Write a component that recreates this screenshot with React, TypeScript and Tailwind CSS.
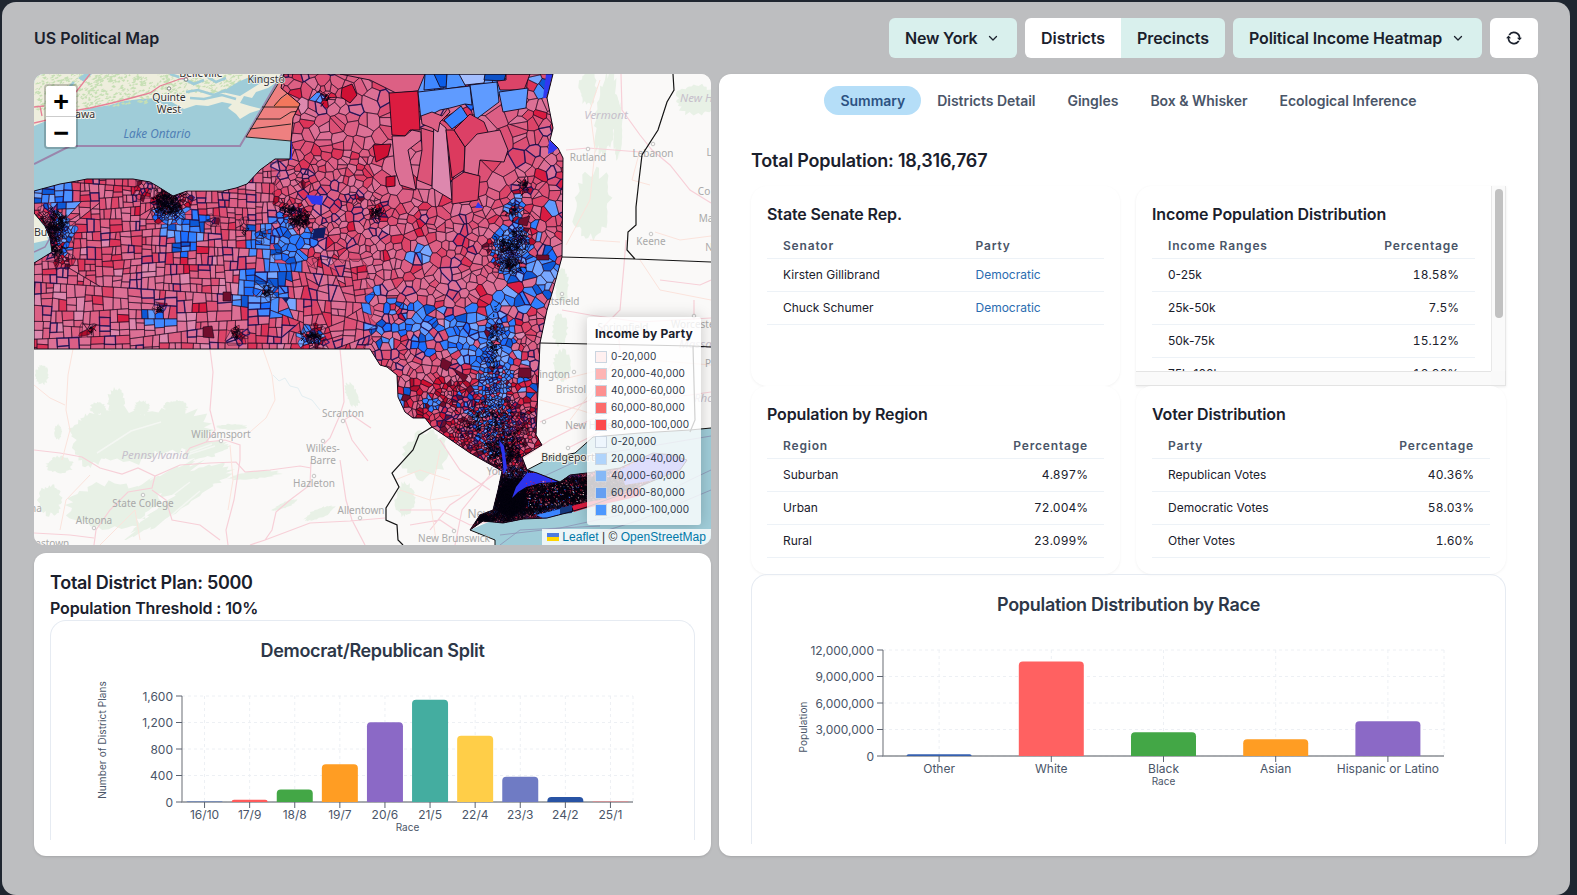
import React from "react";

type Pt = [number, number];

/* ---------- deterministic random numbers ---------- */
function makeRng(seed: number) {
  let s = seed;
  return () => {
    s = (s + 0x6d2b79f5) | 0;
    let t = Math.imul(s ^ (s >>> 15), 1 | s);
    t = (t + Math.imul(t ^ (t >>> 7), 61 | t)) ^ t;
    return ((t ^ (t >>> 14)) >>> 0) / 4294967296;
  };
}

/* ---------- geography ---------- */
const STATE =
  "M34 191L60 184L77 181L87 179L133 179L150 182L157 186L173 196L187 191L223 191L236 188L247 184L260 170L275 159L290 159L291 141L293 118L300 104L281 88L284 74H553L547 98L553 128L550 140L558 148L563 158L562 257L553 290L547 310L540 343L536 435L542 445L522 457L527 470L537 473L560 482L570 475L587 473L620 468L653 453L672 455L687 460L680 470L655 480L620 495L587 507L570 512L547 518L523 519L503 523L483 521L470 530L480 515L493 510L498 490L502 471L470 453L432 427L425 418L413 418L405 412L398 397L397 375L387 367L380 365L370 349H34V263L52 252L50 238L45 226L34 213Z";

/* city centres: x, y, radius, minimum cell area */
const CITIES: [number, number, number, number][] = [
  [55, 232, 16, 5], [48, 218, 10, 8], [62, 258, 9, 9], [168, 206, 16, 5], [180, 198, 10, 8],
  [297, 217, 13, 7], [283, 205, 9, 16], [377, 213, 7, 10], [354, 200, 7, 16], [508, 256, 16, 6], [520, 238, 12, 7],
  [516, 210, 9, 12], [523, 186, 8, 10], [497, 246, 10, 9], [313, 337, 11, 8], [238, 336, 6, 8],
  [267, 291, 7, 9], [326, 97, 8, 16], [303, 180, 7, 20], [142, 190, 9, 18], [490, 358, 9, 14],
  [495, 385, 22, 14], [492, 415, 26, 11], [470, 430, 25, 12], [500, 440, 28, 8], [520, 425, 18, 10],
  [430, 405, 14, 22], [455, 395, 16, 18], [498, 330, 12, 16], [400, 310, 8, 20], [90, 329, 5, 12],
  [160, 308, 5, 12], [245, 225, 5, 14], [262, 235, 6, 14], [212, 220, 5, 14],
];

function targetArea(x: number, y: number) {
  if (y > 466 && x > 480) return x > 580 ? 14 : 6;
  let a = 78;
  if (x > 385 && x < 520 && y < 195) a = 430;
  else if (x >= 520 && y < 200) a = 120;
  else if (x > 300 && x <= 385 && y < 150) a = 170;
  else if (x > 240 && x < 385 && y < 260) a = 70;
  else if (x > 365) a = y > 320 ? 66 : 100;
  else if (y > 290) a = 110;
  for (const [cx, cy, r, m] of CITIES) {
    const d = Math.hypot(x - cx, y - cy) / r;
    if (d < 1.6) a = Math.min(a, d < 0.5 ? m : m + (d - 0.5) * (d - 0.5) * 80);
  }
  return a;
}

/* blue territory: x, y, rx, ry, probability */
const BLUE: [number, number, number, number, number][] = [
  [50, 192, 20, 16, 0.9], [64, 222, 9, 34, 0.7], [184, 226, 22, 18, 0.85], [186, 244, 14, 12, 0.95],
  [168, 214, 14, 12, 0.7], [278, 222, 12, 12, 0.6], [258, 237, 12, 14, 0.95], [284, 252, 20, 30, 0.93], [308, 238, 18, 9, 0.95],
  [262, 288, 26, 22, 0.9], [244, 297, 10, 12, 0.8], [278, 305, 14, 12, 0.8], [160, 318, 20, 6, 0.95],
  [308, 336, 14, 10, 0.5], [512, 252, 20, 28, 0.85], [516, 214, 9, 20, 0.8], [548, 270, 14, 20, 0.85],
  [545, 220, 12, 22, 0.4], [525, 290, 26, 24, 0.75], [490, 86, 66, 14, 0.6], [420, 255, 16, 10, 0.7],
  [400, 325, 34, 26, 0.42], [440, 330, 30, 24, 0.5], [480, 335, 36, 34, 0.75], [380, 305, 20, 14, 0.5],
  [494, 365, 18, 45, 0.82], [402, 395, 12, 10, 0.6], [431, 403, 9, 9, 0.8], [470, 400, 12, 18, 0.4],
  [525, 370, 14, 30, 0.35], [495, 430, 20, 30, 0.35], [560, 512, 26, 8, 0.9], [510, 492, 40, 24, 0.4], [318, 98, 8, 6, 0.5],
];

const REDS = ["#dc7095", "#dc6084", "#dc5075", "#dc5f85", "#dc4468", "#dc3358", "#dc7399", "#dc5075", "#d91c42", "#dd88ae"];
const HOT = ["#dc2448", "#d00f30", "#dc4468", "#b00d2c", "#700d2c", "#dc6084"];
const BLUES = ["#4a90ff", "#5f9bff", "#2f7fff", "#1c6eff", "#4088ff", "#0d58d6", "#78a8ff"];

function pickColor(x: number, y: number, r: () => number) {
  for (const [cx, cy, rx, ry, p] of BLUE) {
    const d = ((x - cx) / rx) ** 2 + ((y - cy) / ry) ** 2;
    if (d < 1 && r() < p) return BLUES[Math.floor(r() * BLUES.length)];
  }
  const hot = y > 380 || targetArea(x, y) < 35;
  if (hot && r() < 0.6) return HOT[Math.floor(r() * HOT.length)];
  if (y > 270 && x < 240 && r() < 0.5) return r() < 0.25 ? "#dd88ae" : "#dc7095";
  return REDS[Math.floor(r() * r() * 1.25 * REDS.length) % REDS.length];
}

function areaOf(p: Pt[]) {
  let a = 0;
  for (let i = 0; i < p.length; i++) {
    const q = p[(i + 1) % p.length];
    a += p[i][0] * q[1] - q[0] * p[i][1];
  }
  return Math.abs(a / 2);
}

function splitBy(p: Pt[], c: Pt, nx: number, ny: number): [Pt[], Pt[]] {
  const A: Pt[] = [], B: Pt[] = [];
  for (let i = 0; i < p.length; i++) {
    const u = p[i], v = p[(i + 1) % p.length];
    const du = (u[0] - c[0]) * nx + (u[1] - c[1]) * ny;
    const dv = (v[0] - c[0]) * nx + (v[1] - c[1]) * ny;
    (du >= 0 ? A : B).push(u);
    if (du >= 0 !== dv >= 0) {
      const t = du / (du - dv);
      const m: Pt = [u[0] + (v[0] - u[0]) * t, u[1] + (v[1] - u[1]) * t];
      A.push(m);
      B.push(m);
    }
  }
  return [A, B];
}

interface Leaf { poly: Pt[]; x: number; y: number; goal: number }

/* Western townships stay on a surveyed grid; elsewhere cells become Voronoi regions. */
function buildCells() {
  const r = makeRng(41);
  const leaves: Leaf[] = [];
  const walk = (p: Pt[], depth: number) => {
    if (p.length < 3) return;
    let cx = 0, cy = 0, x0 = 1e9, x1 = -1e9, y0 = 1e9, y1 = -1e9;
    for (const [x, y] of p) {
      cx += x / p.length;
      cy += y / p.length;
      x0 = Math.min(x0, x); x1 = Math.max(x1, x);
      y0 = Math.min(y0, y); y1 = Math.max(y1, y);
    }
    if (y0 > 362 && x1 < 375) return;
    if (x0 > 575 && y1 < 440) return;
    const a = areaOf(p);
    const t = targetArea(cx, cy);
    const goal = a < 900 ? t * (0.7 + r() * 0.9) : 0;
    if (a <= goal || depth > 22) {
      const j = Math.sqrt(a) * 0.9;
      leaves.push({ poly: p, x: cx + (r() - 0.5) * j, y: cy + (r() - 0.5) * j, goal: Math.max(a, t) });
      return;
    }
    const wide = x1 - x0 > y1 - y0;
    const wob = t < 30 ? 0.7 : cx > 280 ? 0.4 : 0.09;
    const ang = (wide ? Math.PI / 2 : 0) + (r() - 0.5) * 2 * wob * (r() < 0.15 ? 1.8 : 1);
    const c: Pt = [cx + (r() - 0.5) * (x1 - x0) * 0.25, cy + (r() - 0.5) * (y1 - y0) * 0.25];
    const [A, B] = splitBy(p, c, -Math.sin(ang), Math.cos(ang));
    walk(A, depth + 1);
    walk(B, depth + 1);
  };
  walk([[20, 60], [700, 60], [700, 545], [20, 545]], 0);

  const G = 10;
  const grid: Record<string, Leaf[]> = {};
  for (const l of leaves) {
    const k = Math.floor(l.x / G) + ":" + Math.floor(l.y / G);
    (grid[k] = grid[k] || []).push(l);
  }
  const fills: Record<string, string> = {};
  let navy = "";
  for (const l of leaves) {
    let p = l.poly;
    const organic = l.x > 370 || (l.x > 275 && l.y < 262) || targetArea(l.x, l.y) < 40;
    if (organic) {
      const R = Math.sqrt(l.goal) * 1.7;
      p = [[l.x - R, l.y - R], [l.x + R, l.y - R], [l.x + R, l.y + R], [l.x - R, l.y + R]];
      const near: [number, Leaf][] = [];
      const n = Math.ceil((R * 2) / G);
      const gx = Math.floor(l.x / G), gy = Math.floor(l.y / G);
      for (let i = -n; i <= n; i++)
        for (let k = -n; k <= n; k++)
          for (const o of grid[gx + i + ":" + (gy + k)] || [])
            if (o !== l) near.push([Math.hypot(o.x - l.x, o.y - l.y), o]);
      near.sort((u, v) => u[0] - v[0]);
      for (const [dist, o] of near) {
        if (p.length < 3) break;
        const far = Math.max(...p.map((q) => Math.hypot(q[0] - l.x, q[1] - l.y)));
        if (dist > far * 2) break;
        p = splitBy(p, [(l.x + o.x) / 2, (l.y + o.y) / 2], l.x - o.x, l.y - o.y)[0];
      }
      if (p.length < 3) continue;
    }
    const col = pickColor(l.x, l.y, r);
    const d = "M" + p.map((q) => q[0].toFixed(1) + " " + q[1].toFixed(1)).join("L") + "Z";
    fills[col] = (fills[col] || "") + d;
    if (r() < 0.1) navy += d;
  }
  return { fills, navy };
}
const CELLS = buildCells();

/* tangled street-level outlines around cities */
function scribble() {
  const r = makeRng(7);
  let d = "";
  const spots: [number, number, number, number, number][] = [
    [53, 230, 9, 18, 110], [62, 222, 6, 8, 35], [55, 250, 8, 8, 50], [165, 205, 11, 9, 85], [175, 208, 8, 9, 50], [168, 196, 17, 5, 45], [300, 220, 10, 7, 65], [290, 209, 9, 6, 30],
    [377, 213, 6, 5, 26], [507, 246, 11, 8, 50], [512, 265, 11, 8, 50], [520, 240, 8, 12, 30], [513, 212, 5, 10, 14], [526, 186, 5, 6, 14], [313, 337, 9, 5, 38],
    [237, 335, 4, 5, 14], [267, 291, 4, 5, 16], [490, 420, 34, 22, 110], [505, 452, 18, 18, 220], [495, 345, 6, 40, 50],
    [508, 500, 15, 24, 850], [520, 490, 18, 22, 420], [560, 494, 34, 15, 650], [600, 487, 32, 13, 300], [483, 519, 10, 6, 130], [525, 508, 28, 8, 220],
    [326, 97, 5, 5, 10], [160, 308, 3, 3, 7], [92, 329, 3, 2, 6], [245, 233, 3, 3, 5],
  ];
  for (const [x, y, a, b, n] of spots) {
    for (let i = 0; i < n; i++) {
      const t = r() * 6.283, q = Math.sqrt(r()) * (0.3 + 0.8 * r());
      let px = x + Math.cos(t) * a * q * 1.25, py = y + Math.sin(t) * b * q * 1.25;
      d += `M${px.toFixed(1)} ${py.toFixed(1)}`;
      for (let k = 0; k < 3; k++) {
        px += (r() - 0.5) * 5;
        py += (r() - 0.5) * 5;
        d += `L${px.toFixed(1)} ${py.toFixed(1)}`;
      }
    }
  }
  return d;
}
const SCRIBBLE = scribble();

const TINY = (() => {
  const r = makeRng(99);
  const out: { d: string; c: string }[] = [];
  const cs = ["#e2264b", "#f4a6b8", "#2f6fff", "#ffffff", "#c01034", "#8a1030"];
  for (const c of cs) {
    let d = "";
    for (let i = 0; i < (c === "#ffffff" ? 12 : 34); i++) {
      const x = 525 + r() * 58, y = 480 + r() * 27;
      d += `M${x.toFixed(1)} ${y.toFixed(1)}l${(0.8 + r() * 1.4).toFixed(1)} .4l-.5 1.1z`;
    }
    out.push({ d, c });
  }
  return out;
})();

/* ragged woodland patches */
function blotch(cx: number, cy: number, rx: number, ry: number, seed: number, tilt = 0) {
  const r = makeRng(seed);
  let d = "";
  const n = 46;
  for (let i = 0; i < n; i++) {
    const t = (i / n) * 6.283, k = 0.76 + r() * 0.34;
    const x = Math.cos(t) * rx * k, y = Math.sin(t) * ry * k;
    d += `${i ? "L" : "M"}${(cx + x * Math.cos(tilt) - y * Math.sin(tilt)).toFixed(1)} ${(cy + x * Math.sin(tilt) + y * Math.cos(tilt)).toFixed(1)}`;
  }
  return d + "Z";
}
const WOODS = [
  blotch(120, 436, 52, 28, 1), blotch(170, 430, 44, 24, 2), blotch(92, 440, 20, 28, 3), blotch(112, 505, 46, 24, 4),
  blotch(116, 402, 9, 14, 5), blotch(176, 408, 12, 8, 6), blotch(98, 408, 8, 6, 61), blotch(142, 408, 8, 8, 62), blotch(150, 490, 60, 9, 7, -0.55), blotch(175, 505, 60, 8, 8, -0.6),
  blotch(195, 480, 40, 12, 9, -0.3), blotch(205, 450, 24, 8, 10, -0.2), blotch(232, 427, 16, 3, 11), blotch(255, 475, 28, 4, 12, -0.1),
  blotch(320, 513, 18, 5, 13, -0.4), blotch(285, 505, 14, 3, 14, -0.4), blotch(352, 395, 6, 14, 15, -0.4), blotch(42, 375, 7, 10, 16),
  blotch(58, 432, 4, 8, 17), blotch(606, 115, 11, 44, 18, 0.1), blotch(592, 205, 19, 36, 19, 0.15), blotch(588, 88, 9, 18, 20),
  blotch(695, 100, 20, 16, 21), blotch(562, 285, 7, 20, 22), blotch(560, 330, 8, 16, 23), blotch(425, 455, 22, 26, 24, 0.5),
  blotch(405, 500, 10, 18, 25), blotch(50, 500, 12, 16, 26), blotch(60, 465, 14, 9, 27), blotch(562, 365, 9, 16, 28), blotch(618, 130, 5, 30, 29),
];
const ONTARIO_WOODS = (() => {
  const r = makeRng(55);
  let d = "";
  for (let i = 0; i < 900; i++) {
    const x = 34 + r() * 205, y = 70 + r() * (x < 150 ? 40 : 32) - (x - 34) * 0.05;
    d += `M${x.toFixed(1)} ${y.toFixed(1)}l${(1 + r() * 3).toFixed(1)} ${(-0.6 - r() * 1.6).toFixed(1)}l${(r() * 1.4).toFixed(1)} ${(0.6 + r()).toFixed(1)}l${(-1 - r() * 2).toFixed(1)} ${(0.5 + r()).toFixed(1)}z`;
  }
  return d;
})();

const PLACES: [string, number, number][] = [
  ["Williamsport", 221, 438], ["State College", 143, 507], ["Altoona", 94, 524],
  ["Scranton", 343, 417], ["Wilkes-", 323, 452], ["Barre", 323, 464], ["Hazleton", 314, 487],
  ["Allentown", 361, 514], ["New Brunswick", 454, 542], ["Rutland", 588, 161],
  ["Lebanon", 653, 157], ["Keene", 651, 245], ["New Haven", 592, 429],
  ["Bristol", 571, 393], ["Springfield", 623, 331], ["Torrington", 545, 378],
];
const DOTS: Pt[] = [
  [221, 441], [143, 495], [94, 528], [343, 421], [323, 441], [314, 476], [360, 518], [588, 149], [653, 144], [651, 234],
  [562, 294], [574, 372], [544, 422], [568, 448], [454, 531], [694, 316],
];

function StateMap() {
  return (
    <svg className="block h-full w-full" viewBox="34 74 677 471" fontFamily='"Noto Sans", sans-serif'>
      <defs>
        <clipPath id="ny"><path d={STATE} /></clipPath>
      </defs>
      <rect x="34" y="74" width="677" height="471" fill="#faf9f8" />
      {/* Lake Ontario and its north shore */}
      <path d="M34 74H300V165H275L247 190H187L173 200L150 190H34Z" fill="#9fccd8" />
      <path d="M34 210L52 235V252L34 270Z" fill="#9fccd8" />
      <path d="M34 213L45 228L48 240L34 243Z" fill="#eef0e0" />
      <path d="M34 74H288L268 88L256 92L252 98L244 96L240 103L250 106L262 109L250 113L240 119L236 114L228 108L232 104L222 102L208 106L196 105L184 109L170 101L158 98L140 99L124 101L110 105L92 108L76 112L62 116L46 121L34 126Z" fill="#eeeedd" />
      <path d={ONTARIO_WOODS} fill="#c6dfb4" />
      <path d="M170 74L182 78L194 84L204 80M186 92L198 90L214 95L226 90M60 97L66 91L74 82M190 98L204 99L222 95L236 99M206 76L216 82L226 78" fill="none" stroke="#9fccd8" strokeWidth="2.6" />
      <path d="M222 92L238 82L252 76L270 77L256 86L240 96ZM78 78L84 74H92L84 82Z" fill="#9fccd8" />
      <path d="M34 123L60 117L66 112L90 108L112 103L135 97L150 93L160 86L180 79L196 75M76 92L90 74M34 107L44 106M40 106L42 116" fill="none" stroke="#e68096" strokeWidth="1.3" />
      <path d="M34 164L70 146H240L282 74" fill="none" stroke="#9a86ac" strokeWidth="2" />
      <path d="M34 252L45 247L50 238" fill="none" stroke="#9a86ac" strokeWidth="1.5" />

      {/* inland woodland and roads */}
      <path d={WOODS.join("")} fill="#e8f1e6" />
      <path d="M97 453l34-22 30-9M150 480l40-26 25-8M140 520l50-38M160 525l40-34M190 452l22-8" stroke="#faf9f8" strokeWidth="1.5" fill="none" opacity=".7" />
      <g fill="none" stroke="#f7d0d8" strokeWidth="1.2">
        <path d="M34 450L60 453L82 457L100 468L122 474L138 468L155 476L180 465L210 463L236 462L245 472L270 470L300 466L311 468" />
        <path d="M210 349L213 372L210 410L215 430L206 442L190 448L186 453" />
        <path d="M206 442L225 440L240 445L240 460L234 500L226 530L228 545M340 349L343 380L344 402L340 415L330 438L324 444M344 420L352 415L365 424L371 428M345 420L352 440L368 461M311 462L310 485L290 500L276 512L272 530L265 540L250 545M340 460L346 500L352 520L365 545M265 540L310 523L350 521L385 518" />
        <path d="M155 476L152 488L128 492L110 510L96 530L94 545M152 490L166 500L172 520L200 525L220 540M34 533L70 535L94 538" />
        <path d="M621 74L622 110L640 135L652 150L670 165L690 190L711 203M566 150L588 148L640 152M626 240L624 265L620 310L600 330M562 310L590 315L640 322L711 318M660 280L700 285L711 280M694 300V320" />
        <path d="M520 460L550 440L590 420L640 400L690 395L711 392M540 422L590 400L620 350L618 330M568 448L600 432M400 510L440 510L470 525L500 520M430 530L450 505L480 485L500 470M440 440L460 470L490 490M455 545L462 510L490 475M410 525L440 520L455 530" />
      </g>
      <g fill="none" stroke="#fbe3dc" strokeWidth="1">
        <path d="M73 349L68 375L66 410L70 430L62 460M34 385L50 398L65 405M263 349L272 375L275 400L266 418L250 432M60 530L66 500L90 475M100 545L120 525L135 510L140 540M230 445L233 480L228 510" />
        <path d="M600 80L590 110L595 150L590 200L566 245M590 240L620 242M640 150L632 180L650 185M655 232L680 240L711 236M640 260L660 290L711 300M560 380L600 370L650 360L711 365M570 420L600 380L610 350" />
        <path d="M395 480L420 470L450 480M400 490L430 500L460 495M440 450L430 500L436 540M540 400L580 410L640 430" />
      </g>
      <path d="M273 375l6 6 6-3 5 8 8 2 4 8 10 4 8 10" fill="none" stroke="#e2eef2" />

      {/* Atlantic coast */}
      <path d="M527 470L550 458L575 453L593 437L640 433L690 430L711 428V545H495V540L470 530L493 520Z" fill="#9fccd8" />
      <path d="M527 470L550 458L575 453L593 437L640 433L690 430L711 428M470 530L495 540V545" fill="none" stroke="#111" />
      <path d="M540 478L590 455L640 448L711 436M500 535L560 528L620 515L690 480L711 470M500 545L520 530L600 526M560 545L640 520L711 490" fill="none" stroke="#8d93b5" strokeWidth=".8" />

      {/* place names beneath the overlay */}
      <g fontSize="10" fill="#a9a9a9" textAnchor="middle">
        {PLACES.map(([t, x, y]) => <text key={t} x={x} y={y}>{t}</text>)}
        <text x="671" y="328" textAnchor="start">Worcester</text>
        <text x="559" y="305">Pittsfield</text>
        <text x="36" y="512">ha</text>
        <text x="52" y="547">nstown</text>
        <text x="704" y="195">Co</text>
        <text x="706" y="222">Ma</text>
        <text x="709" y="251">N</text>
        <text x="709" y="156">L</text>
        <text x="708" y="367">P</text>
        <text x="497" y="475">York</text>
        <text x="480" y="518" fontSize="12">New</text>
      </g>
      <g fill="#faf9f8" stroke="#b9b9b9" strokeWidth=".8">
        {DOTS.map(([x, y], i) => <circle key={i} cx={x} cy={y} r="1.8" />)}
      </g>
      <g fontStyle="italic" fill="#c6bfcb" textAnchor="middle" fontSize="11.5">
        <text x="155" y="459">Pennsylvania</text>
        <text x="606" y="119">Vermont</text>
        <text x="680" y="102" textAnchor="start">New H</text>
        <text x="679" y="348" textAnchor="start">Massa</text>
        <text x="694" y="402" textAnchor="start">Rho</text>
      </g>
      <g fontSize="10.5" fill="#333" textAnchor="middle" stroke="#f4f4ee" strokeWidth="2" paintOrder="stroke">
        <text x="201" y="77">Belleville</text>
        <text x="169" y="101">Quinte</text>
        <text x="169" y="113">West</text>
        <text x="75" y="117.500" textAnchor="start">awa</text>
        <text x="34" y="236" textAnchor="start">Buf</text>
        <text x="568" y="461">Bridgeport</text>
      </g>
      <g fill="#fff" stroke="#666" strokeWidth=".8"><circle cx="169" cy="88.500" r="1.700" /><circle cx="186" cy="79.500" r="1.700" /></g>
      <text x="157" y="138" textAnchor="middle" fontSize="11.8" fontStyle="italic" fill="#4f7fb5">Lake Ontario</text>

      {/* neighbouring state lines */}
      <path d="M673 74L674 90L667 102L658 130L642 155L639 180L636 207V225L628 232L627 250L635 259M562 257L635 259L711 262M540 343L693 346L711 347M693 346L695 420L690 432M432 427L419 435L413 450L392 473L399 487L386 508V520L397 525L398 540L403 545" fill="none" stroke="#151515" strokeWidth="1.2" />

      {/* offshore precincts */}
      <path d="M246 137L284 74L300 104L293 118L291 141Z" fill="#ee8080" />
      <path d="M275 103L292 92L306 106L300 108H274Z" fill="#f47452" opacity=".8" />
      <path d="M246 137L284 74M246 137L291 141M250 129L291 124M256 119H280L291 112L300 111M262 107H300M274 106L281 98L300 84" fill="none" stroke="#1b1b1b" strokeWidth=".9" />

      <g clipPath="url(#ny)">
        <rect x="34" y="74" width="677" height="471" fill="#dc5075" />
        {Object.entries(CELLS.fills).map(([c, d]) => (
          <path key={c} d={d} fill={c} />
        ))}
        <path d={CELLS.navy} fill="none" stroke="#2a2ab0" strokeWidth="1.5" opacity=".7" />
        <path d={Object.values(CELLS.fills).join("")} fill="none" stroke="#1c0a20" strokeWidth=".5" />

        {/* northern wilderness districts */}
        <g stroke="#14081c" strokeWidth=".9">
          <path d="M340 74H425L418 91L396 93L370 80Z" fill="#dc6084" />
          <path d="M425 74H444V88L424 90Z" fill="#4088ff" />
          <path d="M434 74H447V87L440 87Z" fill="#0c5ee8" />
          <path d="M447 74H460L466 86L446 89Z" fill="#4f94ff" />
          <path d="M459 74H486L484 83L465 85Z" fill="#a4bfff" />
          <path d="M485 74H506L504 81L484 80Z" fill="#0d52c8" />
          <path d="M497 81L506 80V74H530L524 90L500 90Z" fill="#dc4468" />
          <path d="M389 93L418 91L420 130H410L405 136L392 135Z" fill="#dc1c40" />
          <path d="M418 92L470 86L472 105L465 104L450 108L440 110L421 120Z" fill="#5f9bff" />
          <path d="M470 85L497 82L499 102L475 120Z" fill="#5f9bff" />
          <path d="M499 92L528 88L526 108L503 112Z" fill="#5f9bff" />
          <path d="M392 136L405 136L412 130L421 132V140L408 150L416 190L400 185L395 170Z" fill="#dc7095" />
          <path d="M421 128L434 132L432 186L417 180L422 150Z" fill="#dc5478" />
          <path d="M434 118L446 128L452 200L432 188Z" fill="#dd88ae" />
          <path d="M421 116L432 112L442 116L448 108L450 112L440 122L438 132L432 128L422 124Z" fill="#dc6084" />
          <path d="M444 120L461 106L468 117L452 129Z" fill="#3a84ff" />
          <path d="M446 130L454 130L465 147L464 170L452 178Z" fill="#dc3a5e" />
          <path d="M454 130L470 114L484 122L488 132L465 147Z" fill="#dc4066" />
          <path d="M465 147L477 134L500 130L508 150L504 162L480 160L478 176L464 172Z" fill="#dc6a8e" />
          <path d="M464 172L480 176L478 200L452 204V180Z" fill="#dc4468" />
          <path d="M373 145L391 144L388 156L376 162Z" fill="#cf1034" />
          <path d="M342 88L352 84L357 95L350 103L341 97Z" fill="#cf1034" />
          <path d="M386 177L395 176V186L386 187Z" fill="#cf1034" />
        </g>
        <g fill="#3038f0">
          <path d="M546 74H553L546 98H543ZM549 140L558 148L553 152L548 154ZM289 141H292V160H289Z" />
          <path d="M306 195L323 196L322 205L312 204ZM478 202L483 208L475 208Z" />
          <path d="M498 440L503 446L506 468L503 475L502 455Z" />
        </g>
        <g fill="#101c60"><path d="M314 229L326 227L324 238L312 239ZM282 298L290 297L286 303Z" /></g>
        <g fill="#700d2c" stroke="#14081c" strokeWidth=".6">
          <path d="M223 292H231V301H223ZM203 327L212 326L214 338L203 337ZM519 219L530 216L527 226L518 224ZM536 255H549V260H537ZM442 358L452 363L447 371L440 367ZM452 368L468 376L464 382ZM519 368H531V378L518 377Z" />
        </g>
        <path d="M497 478H560L587 477H640L640 500L590 502L547 510L500 520L470 530L493 508Z" fill="#05030c" opacity=".6" />
        <path d={SCRIBBLE} fill="none" stroke="#05030f" strokeWidth=".8" />
      </g>
      <path d="M527 473L537 473L558 482L540 483L526 487L518 492L512 498L516 487Z" fill="#2d34ee" />
      <path d="M499 440L504 446L507 468L504 474L502 455Z" fill="#2d34ee" />
      <path d="M620 470L653 453L672 455L687 460L680 470L655 480L625 485Z" fill="#5a5af0" />
      {TINY.map((t) => <path key={t.c} d={t.d} fill={t.c} />)}
      <path d="M572 506L587 502L600 500L640 486V496L587 508L574 512Z" fill="#dc1c40" />
      <path d="M560 508L572 505V513L560 514Z" fill="#153a80" />
      <path d="M536 515L560 509V514L545 519Z" fill="#3a84ff" />
      <path d={STATE} fill="none" stroke="#120a18" strokeWidth="1" />
      <text x="247.500" y="82.500" fontSize="10.5" fill="#333" stroke="#f4f4ee" strokeWidth="1.500" paintOrder="stroke">Kingsto</text>
    </svg>
  );
}

/* ---------- legend ---------- */
const LEGEND: [string, string][] = [
  ["0-20,000", "bg-[#fff0f0]"], ["20,000-40,000", "bg-[#feb4b4]"], ["40,000-60,000", "bg-[#fd9090]"],
  ["60,000-80,000", "bg-[#fc6c6c]"], ["80,000-100,000", "bg-[#fc4a4d]"], ["0-20,000", "bg-[#eef6fd]"],
  ["20,000-40,000", "bg-[#b0d4fb]"], ["40,000-60,000", "bg-[#86b8f6]"], ["60,000-80,000", "bg-[#649ff2]"],
  ["80,000-100,000", "bg-[#4c98ff]"],
];

function MapPanel() {
  return (
    <section className="relative h-[471px] overflow-hidden rounded-[10px] bg-[#faf9f8]">
      <StateMap />
      <div className="absolute left-[10px] top-[10px] flex w-[34px] flex-col rounded border-2 border-black/20 bg-clip-padding font-['Liberation_Mono',monospace] text-[27px] font-bold text-black">
        <button className="flex h-[31px] items-center justify-center rounded-t-[2px] border-b border-[#ccc] bg-white pt-[7px] leading-none">+</button>
        <button className="flex h-[30px] items-center justify-center rounded-b-[2px] bg-white pt-[6px] leading-none">−</button>
      </div>
      <div className="absolute left-[553px] top-[243px] h-[208px] w-[114px] rounded-[3px] bg-white/80 px-2 pt-2 shadow-[0_0_15px_rgba(0,0,0,0.2)]">
        <h4 className="mb-[5px] whitespace-nowrap text-[12px] font-bold leading-[18px] tracking-[0.18px] text-[#1a202c]">Income by Party</h4>
        {LEGEND.map(([t, c], i) => (
          <div key={i} className="flex h-[17px] items-center gap-1">
            <span className={"h-3 w-3 shrink-0 border border-[#cbd5e0] " + c} />
            <span className="whitespace-nowrap text-[10px] tracking-[0.13px] text-[#2d3748]">{t}</span>
          </div>
        ))}
      </div>
      <div className="absolute bottom-0 right-0 flex h-4 items-center whitespace-pre bg-white/80 px-[5px] font-['Liberation_Sans',sans-serif] text-[12px] tracking-[0.04px] text-[#333]">
        <svg className="mr-[3px]" width="12" height="8"><rect width="12" height="4" fill="#4C7BE1" /><rect y="4" width="12" height="4" fill="#FFD500" /></svg>
        <span className="text-[#0078A8]">Leaflet</span>
        <span> | © </span>
        <span className="text-[#0078A8]">OpenStreetMap</span>
      </div>
    </section>
  );
}

/* ---------- bar charts ---------- */
interface ChartProps {
  x0: number; x1: number; yTop: number; yBase: number; barW: number; max: number;
  ticks: string[]; data: { label: string; value: number; color: string }[];
  view: [number, number, number, number];
  yLabel: string; yLabelAt: Pt; xLabelAt: Pt;
}

function BarChart(p: ChartProps) {
  const band = (p.x1 - p.x0) / p.data.length;
  const step = (p.yBase - p.yTop) / (p.ticks.length - 1);
  return (
    <svg className="block shrink-0" width={p.view[2]} height={p.view[3]} viewBox={p.view.join(" ")} fontFamily="Inter, sans-serif" fill="#4a5568">
      <g stroke="#edf0f4" strokeDasharray="3 3">
        {p.ticks.map((t, i) => <path key={t} d={`M${p.x0} ${p.yBase - i * step}H${p.x1}`} />)}
        {p.data.map((d, i) => <path key={d.label} d={`M${p.x0 + band * (i + 0.5)} ${p.yTop}V${p.yBase}`} />)}
        <path d={`M${p.x1} ${p.yTop}V${p.yBase}`} />
      </g>
      <path d={`M${p.x0} ${p.yTop}V${p.yBase}H${p.x1}`} stroke="#8b8e94" strokeWidth="1.3" fill="none" />
      {p.ticks.map((t, i) => (
        <g key={t}>
          <path d={`M${p.x0 - 6} ${p.yBase - i * step}H${p.x0}`} stroke="#5c6370" />
          <text x={p.x0 - 9} y={p.yBase - i * step + 4.8} fontSize="12" textAnchor="end">{t}</text>
        </g>
      ))}
      {p.data.map((d, i) => {
        const cx = p.x0 + band * (i + 0.5), x = cx - p.barW / 2;
        const h = (d.value / p.max) * (p.yBase - p.yTop), y = p.yBase - h, r = Math.min(4, h);
        return (
          <g key={d.label}>
            <path d={`M${cx} ${p.yBase}v6`} stroke="#5c6370" />
            <path d={`M${x} ${p.yBase}V${y + r}Q${x} ${y} ${x + r} ${y}H${x + p.barW - r}Q${x + p.barW} ${y} ${x + p.barW} ${y + r}V${p.yBase}Z`} fill={d.color} />
            <text x={cx} y={p.yBase + 17} fontSize="12" textAnchor="middle">{d.label}</text>
          </g>
        );
      })}
      <text x={p.xLabelAt[0]} y={p.xLabelAt[1]} fontSize="10" textAnchor="middle">Race</text>
      <text transform={`translate(${p.yLabelAt[0]} ${p.yLabelAt[1]}) rotate(-90)`} fontSize="10" letterSpacing=".1" textAnchor="middle">{p.yLabel}</text>
    </svg>
  );
}

const SPLIT = [
  { label: "16/10", value: 12, color: "#6b84b8" }, { label: "17/9", value: 35, color: "#ff5a5a" },
  { label: "18/8", value: 190, color: "#43a746" }, { label: "19/7", value: 570, color: "#ff9d23" },
  { label: "20/6", value: 1205, color: "#8b69c6" }, { label: "21/5", value: 1545, color: "#44ada0" },
  { label: "22/4", value: 1000, color: "#ffce48" }, { label: "23/3", value: 380, color: "#6f7bc4" },
  { label: "24/2", value: 76, color: "#2853a4" }, { label: "25/1", value: 13, color: "#dd8a8f" },
];
const RACE = [
  { label: "Other", value: 210000, color: "#3560b0" }, { label: "White", value: 10700000, color: "#ff6161" },
  { label: "Black", value: 2680000, color: "#43a746" }, { label: "Asian", value: 1900000, color: "#ff9d23" },
  { label: "Hispanic or Latino", value: 3930000, color: "#8b69c6" },
];

/* ---------- tables ---------- */
interface TableProps { title: string; head: [string, string]; rows: [string, string][]; party?: boolean }

function TableBlock({ title, head, rows, party }: TableProps) {
  return (
    <div className="flex flex-col px-4 pt-4">
      <h3 className="text-base font-semibold leading-6 tracking-[-0.12px] text-[#1a202c]">{title}</h3>
      <div className="mt-[3px] grid h-[30px] border-b border-[#edf2f7] px-4 pt-1 text-[12px] font-semibold tracking-[0.82px] text-[#4a5568] [grid-template-columns:192.5px_1fr]">
        <span className="self-center">{head[0]}</span>
        <span className={party ? "self-center" : "self-center text-right"}>{head[1]}</span>
      </div>
      {rows.map(([a, b]) => (
        <div key={a} className="grid h-[33px] shrink-0 items-center border-b border-[#edf2f7] px-4 text-[12px] text-[#1a202c] [grid-template-columns:192.5px_1fr]">
          <span>{a}</span>
          <span className={party ? "text-[#2b6cb0]" : "text-right tabular-nums"}>{b}</span>
        </div>
      ))}
    </div>
  );
}

const CARD = "overflow-hidden rounded-2xl bg-white shadow-[0_1px_3px_rgba(0,0,0,0.05)]";

function SummaryPanel() {
  const tabs = ["Districts Detail", "Gingles", "Box & Whisker", "Ecological Inference"];
  return (
    <section className="flex h-[782px] w-[819px] flex-col overflow-hidden rounded-[12px] bg-white px-8 pb-3 shadow-sm">
      <nav className="mt-3 flex h-[29px] shrink-0 justify-center text-sm font-semibold tracking-[-0.03px] text-[#4a5568]">
        <span className="flex items-center rounded-full bg-[#b5def8] px-4 text-[#2c5282]">Summary</span>
        {tabs.map((t) => <span key={t} className="flex items-center whitespace-nowrap px-4">{t}</span>)}
      </nav>
      <h2 className="mt-8 h-[39px] shrink-0 text-lg font-semibold leading-7 tracking-[-0.2px] text-[#1a202c]">Total Population: 18,316,767</h2>
      <div className="grid shrink-0 grid-cols-[369px_370px] grid-rows-[200px_188px] gap-x-4">
        <div className={CARD}>
          <TableBlock title="State Senate Rep." head={["Senator", "Party"]} party rows={[["Kirsten Gillibrand", "Democratic"], ["Chuck Schumer", "Democratic"]]} />
        </div>
        <div className="grid grid-cols-[1fr_15px] grid-rows-[185px_15px] overflow-hidden rounded-tl-2xl bg-white shadow-[0_1px_3px_rgba(0,0,0,0.08)]">
          <div className="overflow-hidden">
            <TableBlock title="Income Population Distribution" head={["Income Ranges", "Percentage"]} rows={[["0-25k", "18.58%"], ["25k-50k", "7.5%"], ["50k-75k", "15.12%"], ["75k-100k", "12.96%"]]} />
          </div>
          <div className="flex justify-center border-x border-[#e8e8e8] bg-[#fafafa] pt-[3px]">
            <div className="h-[129px] w-2 rounded-full bg-[#c1c1c1]" />
          </div>
          <div className="border-y border-[#e4e4e4] bg-[#fafafa]" />
          <div className="border-b border-r border-[#e4e4e4] bg-[#f9f9f9]" />
        </div>
        <div className={CARD}>
          <TableBlock title="Population by Region" head={["Region", "Percentage"]} rows={[["Suburban", "4.897%"], ["Urban", "72.004%"], ["Rural", "23.099%"]]} />
        </div>
        <div className={CARD}>
          <TableBlock title="Voter Distribution" head={["Party", "Percentage"]} rows={[["Republican Votes", "40.36%"], ["Democratic Votes", "58.03%"], ["Other Votes", "1.60%"]]} />
        </div>
      </div>
      <div className="flex min-h-0 flex-1 flex-col overflow-hidden rounded-t-2xl border border-b-0 border-[#e6ebf2]">
        <h3 className="mt-4 shrink-0 text-center text-lg font-semibold leading-7 tracking-[-0.3px] text-[#2d3748]">Population Distribution by Race</h3>
        <BarChart
          view={[752, 619, 753, 180]} x0={883} x1={1444} yTop={650} yBase={756} barW={65} max={12000000}
          ticks={["0", "3,000,000", "6,000,000", "9,000,000", "12,000,000"]} data={RACE}
          yLabel="Population" yLabelAt={[807, 727]} xLabelAt={[1163.5, 785]}
        />
      </div>
    </section>
  );
}

function PlanPanel() {
  return (
    <section className="flex h-[303px] flex-col overflow-hidden rounded-[12px] bg-white px-4 pb-4 pt-4 shadow-sm">
      <h2 className="shrink-0 text-lg font-semibold leading-7 tracking-[-0.28px] text-[#1a202c]">Total District Plan: 5000</h2>
      <p className="h-[23px] shrink-0 text-base font-semibold leading-[22px] tracking-[-0.12px] text-[#1a202c]">Population Threshold : 10%</p>
      <div className="flex min-h-0 flex-1 flex-col overflow-hidden rounded-t-2xl border border-b-0 border-[#e6ebf2]">
        <h3 className="mt-4 shrink-0 text-center text-lg font-semibold leading-7 tracking-[-0.33px] text-[#2d3748]">Democrat/Republican Split</h3>
        <BarChart
          view={[51, 665, 643, 180]} x0={182} x1={633} yTop={696} yBase={802} barW={36} max={1600}
          ticks={["0", "400", "800", "1,200", "1,600"]} data={SPLIT}
          yLabel="Number of District Plans" yLabelAt={[106, 740]} xLabelAt={[407.5, 831]}
        />
      </div>
    </section>
  );
}

/* ---------- header ---------- */
const Chevron = () => (
  <svg width="16" height="16" viewBox="0 0 16 16" fill="none" stroke="#1a202c" strokeWidth="1.3" strokeLinecap="round" strokeLinejoin="round">
    <path d="M4.500 6.500L8 10L11.500 6.500" />
  </svg>
);

function Header() {
  return (
    <header className="flex h-10 items-center gap-2 text-base font-semibold text-[#1a202c]">
      <h1 className="mr-auto">US Political Map</h1>
      <button className="flex h-10 w-32 items-center justify-between rounded-md bg-[#d9f0ed] px-4 tracking-[-0.2px]">New York<Chevron /></button>
      <div className="flex h-10 w-[200px] overflow-hidden rounded-md tracking-[-0.08px]">
        <button className="w-24 bg-white">Districts</button>
        <button className="flex-1 bg-[#d9f0ed]">Precincts</button>
      </div>
      <button className="flex h-10 w-[249px] items-center justify-between whitespace-nowrap rounded-md bg-[#d9f0ed] px-4 tracking-[-0.13px]">Political Income Heatmap<Chevron /></button>
      <button className="flex h-10 w-12 items-center justify-center rounded-md bg-white">
        <svg width="16" height="16" viewBox="0 0 16 16" fill="none" stroke="#1a202c" strokeWidth="1.7">
          <path d="M3.200 4.900A5.700 5.700 0 0 1 13.600 8M12.800 11.100A5.700 5.700 0 0 1 2.400 8" />
          <path d="M11 7.700H15.900L13.500 10.500ZM.1 8.300H5L2.500 5.500Z" fill="#1a202c" stroke="none" />
        </svg>
      </button>
    </header>
  );
}

export default function App() {
  return (
    <div className="h-[895px] w-[1577px] overflow-hidden bg-[#1f2630] pl-[2px] pt-[2px] font-['Inter',sans-serif]">
      <main className="h-[893px] w-[1568px] rounded-[14px] bg-[#bdbec0] px-8 pt-4">
        <Header />
        <div className="mt-4 flex gap-2">
          <div className="flex w-[677px] flex-col gap-2">
            <MapPanel />
            <PlanPanel />
          </div>
          <SummaryPanel />
        </div>
      </main>
    </div>
  );
}
